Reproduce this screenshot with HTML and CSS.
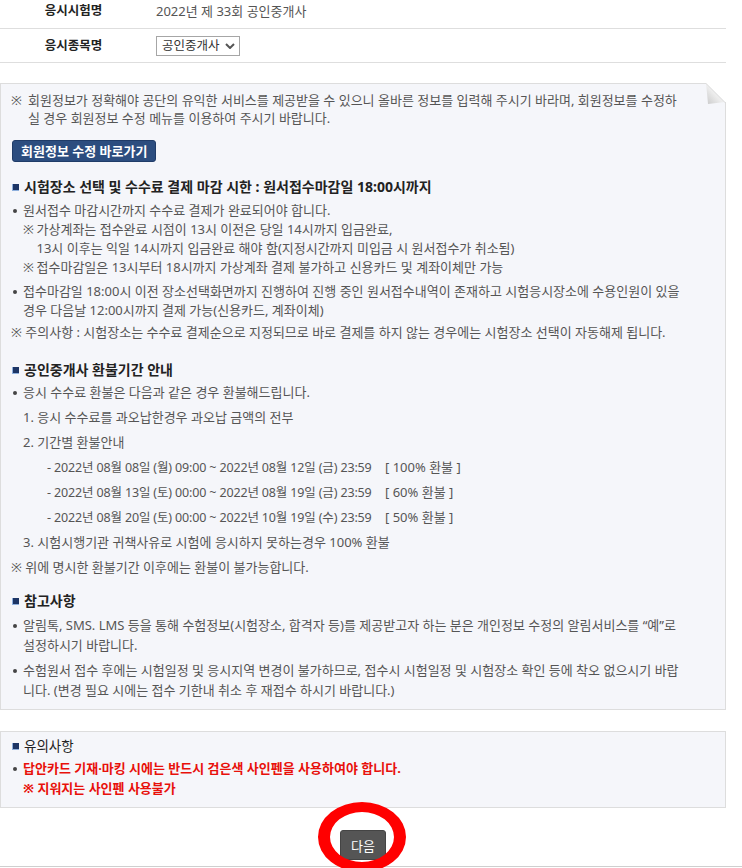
FILE: index.html
```html
<!DOCTYPE html>
<html lang="ko">
<head>
<meta charset="utf-8">
<title>원서접수</title>
<link rel="stylesheet" href="styles.css">
</head>
<body>
<div class="page">
  <div class="exam-table">
    <div class="row row-first">
      <div class="label">응시시험명</div>
      <div class="value">2022년 제 33회 공인중개사</div>
    </div>
    <div class="row row-second">
      <div class="label">응시종목명</div>
      <div class="value">
        <div class="select">
          <span>공인중개사</span>
          <svg class="chev" width="10" height="6" viewBox="0 0 10 6"><path d="M1 1 L5 5 L9 1" fill="none" stroke="#555" stroke-width="2"/></svg>
        </div>
      </div>
    </div>
  </div>

  <div class="notice">
    <svg class="curl" width="22" height="22" viewBox="0 0 22 22">
      <defs>
        <linearGradient id="fold" x1="0" y1="1" x2="1" y2="0">
          <stop offset="0" stop-color="#c9c9c9"/>
          <stop offset="0.45" stop-color="#ececec"/>
          <stop offset="1" stop-color="#fbfbfb"/>
        </linearGradient>
      </defs>
      <polygon points="2,0 22,0 22,20" fill="#fff"/>
      <polygon points="2,0 21,19 4,21 3,10" fill="url(#fold)"/>
      <line x1="2" y1="0.5" x2="21.5" y2="20" stroke="#ddd" stroke-width="1"/>
      <line x1="21.5" y1="19" x2="21.5" y2="22" stroke="#ddd" stroke-width="1"/>
    </svg>

    <p class="note intro"><span class="mark">※</span><span>회원정보가 정확해야 공단의 유익한 서비스를 제공받을 수 있으니 올바른 정보를 입력해 주시기 바라며, 회원정보를 수정하<br>실 경우 회원정보 수정 메뉴를 이용하여 주시기 바랍니다.</span></p>
    <div class="btn-row"><a class="btn-edit">회원정보 수정 바로가기</a></div>

    <h3 class="sec-title"><svg class="sq" width="7" height="7" viewBox="0 0 7 7"><rect width="7" height="7" fill="#8fb0dd"/><rect x="1" y="0" width="6" height="6" fill="#1d3565"/></svg>시험장소 선택 및 수수료 결제 마감 시한 : 원서접수마감일 18:00시까지</h3>
    <ul class="dots sec1">
      <li><div>원서접수 마감시간까지 수수료 결제가 완료되어야 합니다.
        <p class="note sub"><span class="mark">※</span><span>가상계좌는 접수완료 시점이 13시 이전은 당일 14시까지 입금완료,<br>13시 이후는 익일 14시까지 입금완료 해야 함(지정시간까지 미입금 시 원서접수가 취소됨)</span></p>
        <p class="note sub"><span class="mark">※</span><span>접수마감일은 13시부터 18시까지 가상계좌 결제 불가하고 신용카드 및 계좌이체만 가능</span></p>
      </div></li>
      <li><div>접수마감일 18:00시 이전 장소선택화면까지 진행하여 진행 중인 원서접수내역이 존재하고 시험응시장소에 수용인원이 있을<br>경우 다음날 12:00시까지 결제 가능(신용카드, 계좌이체)</div></li>
    </ul>
    <p class="plain caution">※ 주의사항 : 시험장소는 수수료 결제순으로 지정되므로 바로 결제를 하지 않는 경우에는 시험장소 선택이 자동해제 됩니다.</p>

    <h3 class="sec-title sec-title-2"><svg class="sq" width="7" height="7" viewBox="0 0 7 7"><rect width="7" height="7" fill="#8fb0dd"/><rect x="1" y="0" width="6" height="6" fill="#1d3565"/></svg>공인중개사 환불기간 안내</h3>
    <ul class="refund">
      <li class="dot-item">응시 수수료 환불은 다음과 같은 경우 환불해드립니다.</li>
      <li class="lv1">1. 응시 수수료를 과오납한경우 과오납 금액의 전부</li>
      <li class="lv1">2. 기간별 환불안내</li>
      <li class="lv2"><span class="period">- 2022년 08월 08일 (월) 09:00 ~ 2022년 08월 12일 (금) 23:59</span><span>[ 100% 환불 ]</span></li>
      <li class="lv2"><span class="period">- 2022년 08월 13일 (토) 00:00 ~ 2022년 08월 19일 (금) 23:59</span><span>[ 60% 환불 ]</span></li>
      <li class="lv2"><span class="period">- 2022년 08월 20일 (토) 00:00 ~ 2022년 10월 19일 (수) 23:59</span><span>[ 50% 환불 ]</span></li>
      <li class="lv1">3. 시험시행기관 귀책사유로 시험에 응시하지 못하는경우 100% 환불</li>
      <li class="lv0">※ 위에 명시한 환불기간 이후에는 환불이 불가능합니다.</li>
    </ul>

    <h3 class="sec-title sec-title-3"><svg class="sq" width="7" height="7" viewBox="0 0 7 7"><rect width="7" height="7" fill="#8fb0dd"/><rect x="1" y="0" width="6" height="6" fill="#1d3565"/></svg>참고사항</h3>
    <ul class="dots sec3">
      <li><div>알림톡, SMS. LMS 등을 통해 수험정보(시험장소, 합격자 등)를 제공받고자 하는 분은 개인정보 수정의 알림서비스를 “예”로<br>설정하시기 바랍니다.</div></li>
      <li><div>수험원서 접수 후에는 시험일정 및 응시지역 변경이 불가하므로, 접수시 시험일정 및 시험장소 확인 등에 착오 없으시기 바랍<br>니다. (변경 필요 시에는 접수 기한내 취소 후 재접수 하시기 바랍니다.)</div></li>
    </ul>
  </div>

  <div class="notice notice-2">
    <h3 class="sec-title warn-title"><svg class="sq" width="7" height="7" viewBox="0 0 7 7"><rect width="7" height="7" fill="#8fb0dd"/><rect x="1" y="0" width="6" height="6" fill="#1d3565"/></svg>유의사항</h3>
    <ul class="dots warn">
      <li><div>답안카드 기재·마킹 시에는 반드시 검은색 사인펜을 사용하여야 합니다.<br>※ 지워지는 사인펜 사용불가</div></li>
    </ul>
  </div>

  <div class="actions">
    <div class="btn-wrap">
      <button class="btn-next" type="button">다음</button>
      <span class="ring"></span>
    </div>
  </div>
</div>
<div class="footer"></div>
</body>
</html>
```

FILE: styles.css
```css
* { box-sizing: border-box; }

html, body {
  margin: 0;
  padding: 0;
  background: #fff;
}

body {
  font-family: "Noto Sans", "Noto Sans CJK KR", sans-serif;
  font-size: 13px;
  color: #555;
  height: 868px;
  overflow: hidden;
}

p, ul, h3 { margin: 0; padding: 0; }
ul { list-style: none; }

.page {
  width: 726px;
}

/* top table */
.row {
  display: flex;
  align-items: center;
  border-bottom: 1px solid #dedede;
}
.row-first {
  height: 29px;
  padding-bottom: 6px;
}
.row-second {
  height: 34px;
}
.label {
  width: 147px;
  text-align: center;
  font-size: 12.5px;
  font-weight: bold;
  color: #222;
  line-height: 18px;
}
.value {
  padding-left: 9px;
  line-height: 18px;
}
.select {
  display: inline-flex;
  align-items: center;
  justify-content: space-between;
  width: 84px;
  height: 20px;
  padding: 0 4px 0 5px;
  border: 1px solid #a6a6a6;
  background: #fff;
  color: #333;
  font-size: 12.5px;
  line-height: 18px;
}
.chev { display: block; }

/* notice boxes */
.notice {
  position: relative;
  margin-top: 20px;
  border: 1px solid #dddddd;
  background: #f5f6fa;
  padding: 7px 10px 9px 10px;
}
.curl {
  position: absolute;
  top: -1px;
  right: -1px;
}

.note {
  display: flex;
}
.intro {
  line-height: 18px;
}
.intro .mark {
  flex: none;
  width: 17px;
}
.sub .mark {
  flex: none;
  width: 13.5px;
}

.btn-row {
  margin-top: 13px;
  padding-left: 1px;
}
.btn-edit {
  display: inline-block;
  height: 22px;
  padding: 0 8px;
  background: #2c4d7f;
  border: 1px solid #203c68;
  border-radius: 3px;
  color: #fff;
  font-weight: bold;
  line-height: 20px;
}

.sec-title {
  display: flex;
  align-items: center;
  gap: 5px;
  margin-top: 15px;
  padding-left: 1px;
  font-size: 14px;
  font-weight: bold;
  color: #222;
  line-height: 20px;
}
.sq { display: block; flex: none; }
.sec-title-2 { margin-top: 18px; }
.sec-title-3 { margin-top: 11px; }

.dots > li {
  display: flex;
}
.dots > li::before {
  content: "";
  flex: none;
  width: 4px;
  height: 4px;
  border-radius: 50%;
  background: #444;
  margin: 8px 6px 0 2px;
}

.sec1 {
  margin-top: 4px;
  line-height: 19px;
}
.sec1 > li + li { margin-top: 5px; }

.caution {
  margin-top: 3px;
  line-height: 19px;
}

.refund {
  line-height: 25px;
}
.refund .dot-item {
  display: flex;
}
.refund .dot-item::before {
  content: "";
  flex: none;
  width: 4px;
  height: 4px;
  border-radius: 50%;
  background: #444;
  margin: 11px 6px 0 2px;
}
.refund .lv1 { padding-left: 12px; }
.refund .lv2 { padding-left: 36px; white-space: nowrap; }
.refund .lv0 { padding-left: 0; }
.period {
  display: inline-block;
  width: 338px;
  font-size: 12.5px;
  letter-spacing: -0.15px;
}

.sec3 {
  margin-top: 4px;
  line-height: 20px;
}
.sec3 > li + li { margin-top: 5px; }
.sec3 > li::before { margin-top: 8.5px; }

.notice-2 {
  margin-top: 21px;
  padding: 4px 10px 9px 10px;
}
.warn-title {
  margin-top: 0;
  font-size: 13.5px;
  font-weight: normal;
}
.warn {
  margin-top: 2px;
  line-height: 20px;
  color: #e8100a;
  font-weight: bold;
}
.warn > li::before { margin-top: 8.5px; background: #444; }

/* next button */
.actions {
  display: flex;
  justify-content: center;
  margin-top: 22px;
}
.btn-wrap {
  position: relative;
}
.btn-next {
  display: block;
  width: 46px;
  height: 30px;
  padding: 0;
  background: #555;
  border: 1px solid #444;
  border-radius: 3px;
  color: #fff;
  font-family: "Noto Sans", "Noto Sans CJK KR", sans-serif;
  font-size: 13px;
}
.ring {
  position: absolute;
  left: -22px;
  top: -28px;
  width: 88px;
  height: 70px;
  border: solid #ff0000;
  border-width: 10px 12px;
  border-radius: 50%;
  pointer-events: none;
  z-index: 2;
}

.footer {
  width: 742px;
  margin-top: 6px;
  border-top: 1px solid #cfcfcf;
}
```
